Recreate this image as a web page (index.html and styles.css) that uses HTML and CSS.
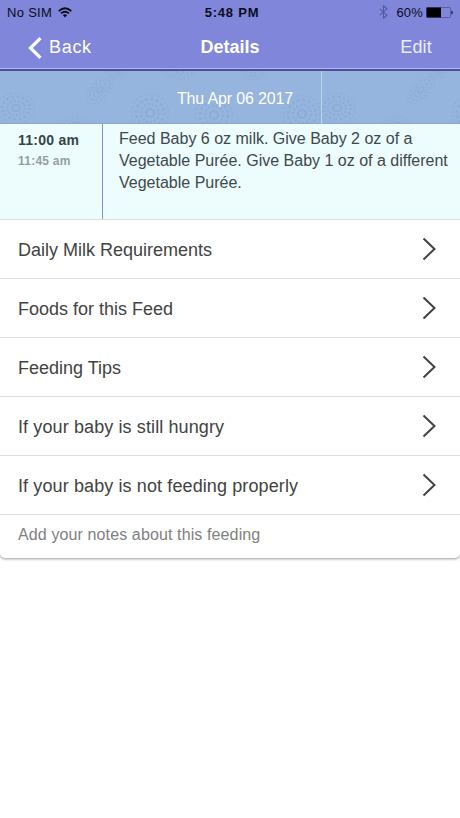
FILE: index.html
```html
<!DOCTYPE html>
<html lang="en">
<head>
<meta charset="utf-8">
<title>Details</title>
<link rel="stylesheet" href="styles.css">
</head>
<body>
<header class="header">
  <div class="status">
    <div class="status-left"><span class="carrier">No SIM</span>
      <svg class="wifi" width="14" height="11" viewBox="0 0 14 11" fill="none" stroke="#0b0c1c" stroke-width="1.8"><path d="M.7 4.1Q7-1.5 13.3 4.1M3 6.4Q7 3 11 6.4"/><path d="M4.8 8.1Q7 6.4 9.2 8.1L7 10.4Z" fill="#0b0c1c" stroke="none"/></svg>
    </div>
    <span class="clock">5:48 PM</span>
    <div class="status-right">
      <svg class="bluetooth" width="9" height="14" viewBox="0 0 9 14" fill="none" stroke="#5359a0" stroke-width="1.1"><path d="M.8 3.8 8 10.2 4.5 13.2V.8L8 3.8.8 10.2"/></svg>
      <span class="percent">60%</span>
      <svg class="battery" width="27" height="11" viewBox="0 0 27 11"><rect x=".5" y=".5" width="24" height="10" rx="1" fill="none" stroke="#5156a0" stroke-width=".8"/><path d="M.5.5H15v10H.5Z" fill="#000"/><path d="M25.3 3.5q1.5.3 1.5 2t-1.5 2Z" fill="#20213d"/></svg>
    </div>
  </div>
  <nav class="nav">
    <a class="back"><svg width="14" height="22" viewBox="0 0 14 22" fill="none" stroke="#fff" stroke-width="3.2"><path d="M12.5 1.2 2.5 11l10 9.8"/></svg><span class="back-label">Back</span></a>
    <h1 class="title">Details</h1>
    <a class="edit">Edit</a>
  </nav>
</header>
<div class="date">
  <svg class="pattern" width="460" height="53" viewBox="0 0 460 53" fill="none" stroke="#809fcb">
    <defs>
      <g id="rosette"><circle r="4" stroke-width="2"/><circle r="9" stroke-width="2" stroke-dasharray="2 2"/><circle r="14" stroke-width="2.5" stroke-dasharray="2.5 3"/><circle r="18.5" stroke-width="1.5" stroke-dasharray="1.5 3"/></g>
      <g id="motifs" opacity=".42">
        <use href="#rosette" x="150" y="42"/>
        <use href="#rosette" x="214" y="44"/>
        <use href="#rosette" transform="translate(16 37) scale(1 .8)"/>
        <use href="#rosette" transform="translate(76 53) scale(.8 .5)"/>
        <use href="#rosette" transform="translate(100 19) rotate(-45) scale(.9 .5)"/>
        <use href="#rosette" transform="translate(302 43)"/>
        <use href="#rosette" transform="translate(253 3) scale(.7 .4)"/>
        <use href="#rosette" transform="translate(180 1) scale(.9 .4)"/>
        <use href="#rosette" transform="translate(117 1) scale(.6 .4)"/>
      </g>
    </defs>
    <use href="#motifs"/><use href="#motifs" x="321"/>
    <path d="M321.5 0V53" stroke="#bcd3ec"/>
  </svg>
  <span class="date-label">Thu Apr 06 2017</span>
</div>
<main class="card">
  <section class="feed">
    <div class="times"><span class="start">11:00 am</span><span class="end">11:45 am</span></div>
    <p class="summary"><span class="line">Feed Baby 6 oz milk. Give Baby 2 oz of a</span><span class="line">Vegetable Purée. Give Baby 1 oz of a different</span><span class="line">Vegetable Purée.</span></p>
  </section>
  <ul class="rows">
    <li class="row"><span class="label">Daily Milk Requirements</span><svg class="arrow" width="15" height="24" viewBox="0 0 15 24"><path d="M1.5 1.5 12.5 12l-11 10.5"/></svg></li>
    <li class="row"><span class="label">Foods for this Feed</span><svg class="arrow" width="15" height="24" viewBox="0 0 15 24"><path d="M1.5 1.5 12.5 12l-11 10.5"/></svg></li>
    <li class="row"><span class="label">Feeding Tips</span><svg class="arrow" width="15" height="24" viewBox="0 0 15 24"><path d="M1.5 1.5 12.5 12l-11 10.5"/></svg></li>
    <li class="row"><span class="label loose">If your baby is still hungry</span><svg class="arrow" width="15" height="24" viewBox="0 0 15 24"><path d="M1.5 1.5 12.5 12l-11 10.5"/></svg></li>
    <li class="row"><span class="label loose">If your baby is not feeding properly</span><svg class="arrow" width="15" height="24" viewBox="0 0 15 24"><path d="M1.5 1.5 12.5 12l-11 10.5"/></svg></li>
  </ul>
  <div class="notes"><span class="notes-label">Add your notes about this feeding</span></div>
</main>
</body>
</html>
```
FILE: styles.css
```css
* { box-sizing: border-box; }
body { margin: 0; min-height: 818px; background: #fff; color: #424242; font-family: "Liberation Sans", Arial, sans-serif; white-space: nowrap; }
.header { height: 71px; background: #8086d9; border-bottom: 2px solid #4c4f9c; box-shadow: inset 0 -1px #b3b8ef; }
.status { height: 24px; padding: 0 7px; display: grid; grid-template-columns: 1fr auto 1fr; align-items: center; color: #0b0c1c; font-size: 13px; }
.status-left, .status-right { display: flex; align-items: center; }
.status-left { gap: 6px; }
.status-right { justify-content: flex-end; }
.carrier { letter-spacing: .3px; }
.clock { padding-left: 4px; font-weight: bold; letter-spacing: .8px; }
.bluetooth { margin-right: 8px; }
.percent { margin-right: 3px; letter-spacing: .2px; }
.nav { height: 46px; padding: 1px 28px 0; display: grid; grid-template-columns: 1fr auto 1fr; align-items: center; color: #fff; font-size: 18px; }
.back { display: flex; align-items: center; gap: 7px; }
.back-label { letter-spacing: .7px; }
.title { margin: 0; font-size: 18px; }
.edit { justify-self: end; color: #eceeff; letter-spacing: .2px; }
.date { height: 53px; display: grid; place-items: center; background: #95b5de; color: #fff; font-size: 16px; overflow: hidden; }
.pattern, .date-label { grid-area: 1 / 1; }
.date-label { z-index: 1; padding: 2px 0 0 10px; letter-spacing: -.15px; }
.card { height: 434px; border-radius: 0 0 5px 5px; box-shadow: 0 1px 3px #0006; }
.feed { height: 95px; display: flex; background: #edfcfd; }
.times { width: 103px; padding: 6px 0 0 18px; display: flex; flex-direction: column; border-right: 1px solid #8793cd; font-weight: bold; }
.start { font-size: 14px; line-height: 20px; letter-spacing: .25px; color: #344347; }
.end { font-size: 12px; line-height: 23px; letter-spacing: .25px; color: #939fa3; }
.summary { margin: 0; padding: 4px 0 0 16px; font-size: 16px; line-height: 22px; color: #3d494c; }
.line { display: block; }
.rows { margin: 0; padding: 0; list-style: none; }
.row { height: 59px; padding: 1px 23px 0 18px; display: flex; align-items: center; justify-content: space-between; border-top: 1px solid #dedede; font-size: 18px; }
.label { padding-top: 1px; }
.loose { letter-spacing: .11px; }
.arrow { margin-bottom: 1px; fill: none; stroke: #424242; stroke-width: 2; }
.notes { height: 44px; padding: 0 18px; border-top: 1px solid #dedede; font-size: 16px; line-height: 40px; letter-spacing: .12px; color: #808080; }
```
